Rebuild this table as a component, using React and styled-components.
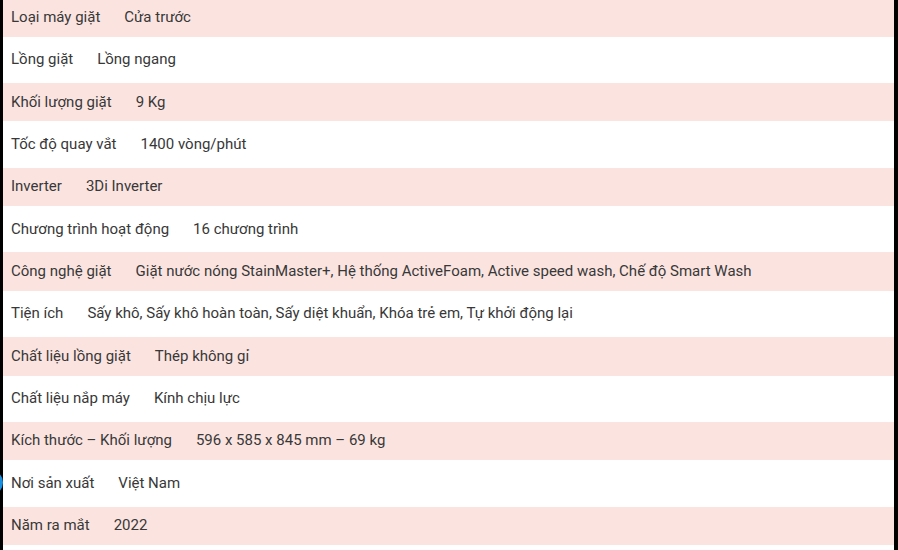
import React from "react";
import styled, { createGlobalStyle } from "styled-components";

const GlobalStyle = createGlobalStyle`
  html, body {
    margin: 0;
    padding: 0;
    background: #000;
  }
  body {
    font-family: Roboto, "Noto Sans", "Liberation Sans", sans-serif;
  }
`;

const Frame = styled.div`
  position: relative;
  width: 898px;
  height: 550px;
  overflow: hidden;
  background: #000;
`;

const Sheet = styled.div`
  margin: 0 4px 0 3px;
  height: 550px;
  background: #fff;
  overflow: hidden;
`;

const List = styled.div`
  margin-top: -3.6px;
`;

const Row = styled.div`
  box-sizing: border-box;
  height: 42.35px;
  padding: 0 8px 1.5px;
  border-top: 2.7px solid transparent;
  border-bottom: 2.7px solid transparent;
  display: flex;
  align-items: center;
  background-color: ${(p) => (p.$shaded ? "#fbe4e0" : "#fff")};
  background-clip: padding-box;
  font-size: 15px;
  color: #383838;
  white-space: nowrap;
`;

const Label = styled.span`
  margin-right: 24px;
`;

const Value = styled.span``;

const Bubble = styled.div`
  position: absolute;
  left: -22px;
  top: 470px;
  width: 25px;
  height: 25px;
  border-radius: 50%;
  background: #1a8fe0;
`;

const specs = [
  ["Loại máy giặt", "Cửa trước"],
  ["Lồng giặt", "Lồng ngang"],
  ["Khối lượng giặt", "9 Kg"],
  ["Tốc độ quay vắt", "1400 vòng/phút"],
  ["Inverter", "3Di Inverter"],
  ["Chương trình hoạt động", "16 chương trình"],
  [
    "Công nghệ giặt",
    "Giặt nước nóng StainMaster+, Hệ thống ActiveFoam, Active speed wash, Chế độ Smart Wash",
  ],
  [
    "Tiện ích",
    "Sấy khô, Sấy khô hoàn toàn, Sấy diệt khuẩn, Khóa trẻ em, Tự khởi động lại",
  ],
  ["Chất liệu lồng giặt", "Thép không gỉ"],
  ["Chất liệu nắp máy", "Kính chịu lực"],
  ["Kích thước – Khối lượng", "596 x 585 x 845 mm – 69 kg"],
  ["Nơi sản xuất", "Việt Nam"],
  ["Năm ra mắt", "2022"],
];

export default function App() {
  return (
    <Frame>
      <GlobalStyle />
      <Sheet>
        <List>
          {specs.map(([label, value], i) => (
            <Row key={label} $shaded={i % 2 === 0}>
              <Label>{label}</Label>
              <Value>{value}</Value>
            </Row>
          ))}
        </List>
      </Sheet>
      <Bubble />
    </Frame>
  );
}
